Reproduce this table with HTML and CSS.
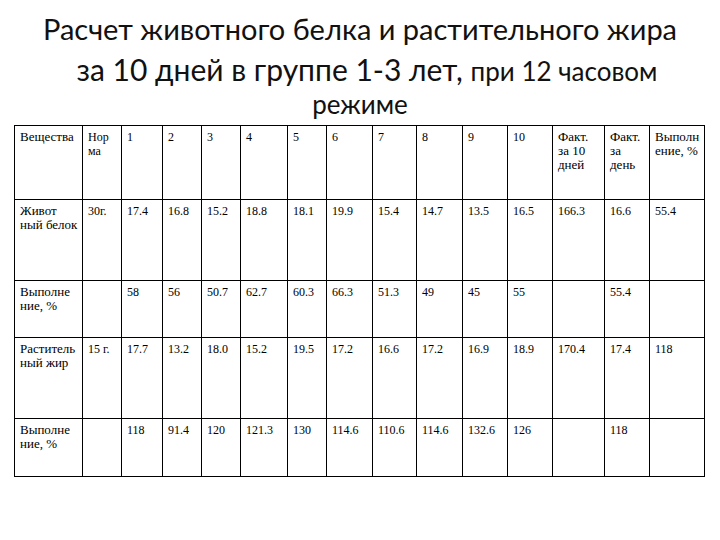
FILE: index.html
```html
<!DOCTYPE html>
<html lang="ru">
<head>
<meta charset="utf-8">
<link rel="stylesheet" href="styles.css">
</head>
<body>
<div class="title">
  <div class="t1">Расчет животного белка и растительного жира</div>
  <div class="t2">за 10 дней в группе 1-3 лет, <span class="sm">при 12 часовом</span></div>
  <div class="t3">режиме</div>
</div>
<table class="grid">
  <colgroup>
    <col style="width:68px"><col style="width:39px"><col style="width:41px"><col style="width:39px"><col style="width:39px"><col style="width:47px"><col style="width:39px"><col style="width:46px"><col style="width:44px"><col style="width:46px"><col style="width:45px"><col style="width:45px"><col style="width:52px"><col style="width:45px"><col style="width:55px">
  </colgroup>
  <tr class="r1">
    <td class="lb">Вещества</td><td>Нор<br><span class="lbs">ма</span></td><td>1</td><td>2</td><td>3</td><td>4</td><td>5</td><td>6</td><td>7</td><td>8</td><td>9</td><td>10</td>
    <td class="lb">Факт.<br>за 10<br>дней</td><td class="lb">Факт.<br>за<br>день</td><td class="lb">Выполн<br>ение, %</td>
  </tr>
  <tr class="r2">
    <td class="lb">Живот<br>ный белок</td><td>30г.</td><td>17.4</td><td>16.8</td><td>15.2</td><td>18.8</td><td>18.1</td><td>19.9</td><td>15.4</td><td>14.7</td><td>13.5</td><td>16.5</td><td>166.3</td><td>16.6</td><td>55.4</td>
  </tr>
  <tr class="r3">
    <td class="lb">Выполне<br>ние, %</td><td></td><td>58</td><td>56</td><td>50.7</td><td>62.7</td><td>60.3</td><td>66.3</td><td>51.3</td><td>49</td><td>45</td><td>55</td><td></td><td>55.4</td><td></td>
  </tr>
  <tr class="r4">
    <td class="lb">Раститель<br>ный жир</td><td>15 г.</td><td>17.7</td><td>13.2</td><td>18.0</td><td>15.2</td><td>19.5</td><td>17.2</td><td>16.6</td><td>17.2</td><td>16.9</td><td>18.9</td><td>170.4</td><td>17.4</td><td>118</td>
  </tr>
  <tr class="r5">
    <td class="lb">Выполне<br>ние, %</td><td></td><td>118</td><td>91.4</td><td>120</td><td>121.3</td><td>130</td><td>114.6</td><td>110.6</td><td>114.6</td><td>132.6</td><td>126</td><td></td><td>118</td><td></td>
  </tr>
</table>
</body>
</html>
```
FILE: styles.css
```css
html, body {
  margin: 0;
  padding: 0;
  background: #fff;
}
body {
  width: 720px;
  height: 540px;
  overflow: hidden;
  color: #000;
}
.title {
  padding-top: 9px;
  text-align: center;
  font-family: "Lato", "Open Sans", sans-serif;
  color: #111;
}
.t1 {
  font-size: 29px;
  line-height: 40px;
  white-space: nowrap;
}
.t2 {
  font-size: 30px;
  line-height: 40px;
  white-space: nowrap;
  padding-left: 14px;
}
.sm {
  font-size: 26px;
}
.t3 {
  font-size: 26px;
  line-height: 26px;
}
.grid {
  margin: 8px 0 0 14px;
  width: 690px;
  table-layout: fixed;
  border-collapse: collapse;
  font-family: "Liberation Serif", "DejaVu Serif", serif;
  font-size: 12px;
  line-height: 14px;
}
.grid td {
  border: 1px solid #000;
  vertical-align: top;
  padding: 4px 3px 0 5px;
  white-space: nowrap;
  overflow: hidden;
}
.grid td.lb {
  font-size: 13px;
}
.lbs {
  font-size: 12px;
}
.r1 td { height: 69px; }
.r2 td { height: 76px; }
.r3 td { height: 52px; }
.r4 td { height: 76px; }
.r5 td { height: 53px; }
.r4 td { border-top-color: #5a0000; }
```
